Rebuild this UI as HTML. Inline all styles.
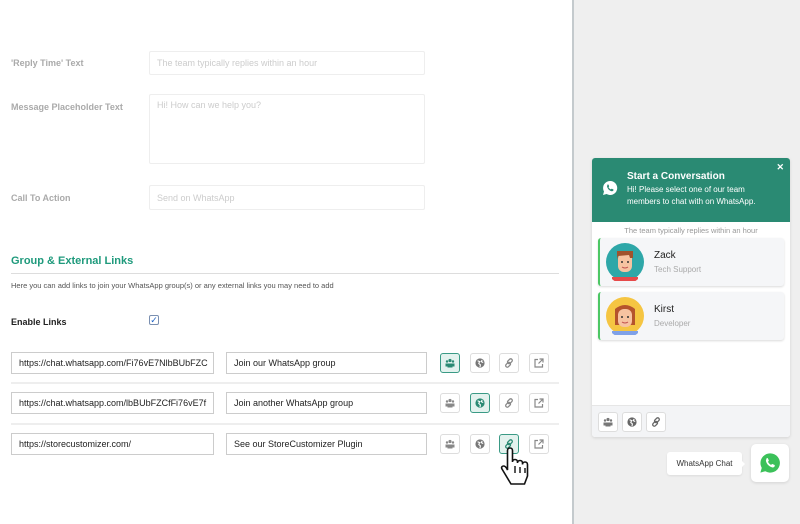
<!DOCTYPE html>
<html><head><style>
*{box-sizing:border-box;margin:0;padding:0}
body{width:800px;height:524px;overflow:hidden;font-family:"Liberation Sans",sans-serif;background:#fff;position:relative}
.abs{position:absolute}
.lbl{position:absolute;left:11px;font-size:9px;color:#aaa;font-weight:bold}
.in{position:absolute;border:1px solid #eee;border-radius:2px;font-size:9px;color:#ccc;padding:0 7px;display:flex;align-items:center}
.in2{position:absolute;border:1px solid #ccc;height:22px;font-size:9px;color:#222;padding:0 7px;display:flex;align-items:center;white-space:nowrap;overflow:hidden}
.ib{position:absolute;width:20px;height:20px;border:1px solid #ddd;border-radius:3px;background:#fff;display:flex;align-items:center;justify-content:center}
.ib.on{border-color:#3a9a85;background:#e3f2ee}
.sep{position:absolute;left:11px;width:548px;height:2px;background:#eee}
</style></head><body>
<div class="abs" style="left:0;top:0;width:573px;height:524px;background:#fff"></div>
<div class="abs" style="left:572px;top:0;width:2px;height:524px;background:#c4cacd"></div>
<div class="abs" style="left:574px;top:0;width:226px;height:524px;background:#efefef"></div>

<div class="lbl" style="top:58px">'Reply Time' Text</div>
<div class="in" style="left:149px;top:51px;width:276px;height:24px">The team typically replies within an hour</div>
<div class="lbl" style="top:102px">Message Placeholder Text</div>
<div class="in" style="left:149px;top:94px;width:276px;height:70px;align-items:flex-start;padding-top:5px">Hi! How can we help you?</div>
<div class="lbl" style="top:193px">Call To Action</div>
<div class="in" style="left:149px;top:185px;width:276px;height:25px">Send on WhatsApp</div>

<div class="abs" style="left:11px;top:255px;font-size:11px;font-weight:bold;color:#1f9a7c">Group &amp; External Links</div>
<div class="abs" style="left:11px;top:273px;width:548px;height:1px;background:#ddd"></div>
<div class="abs" style="left:11px;top:281px;font-size:7.5px;color:#555">Here you can add links to join your WhatsApp group(s) or any external links you may need to add</div>
<div class="abs" style="left:11px;top:317px;font-size:9px;font-weight:bold;color:#222">Enable Links</div>
<div class="abs" style="left:149px;top:315px;width:10px;height:10px;border:1px solid #7a8fb0;border-radius:2px;font-size:9px;line-height:8px;color:#1e63c6;text-align:center">✓</div>

<div class="in2" style="left:11px;top:352px;width:203px">https://chat.whatsapp.com/Fi76vE7NlbBUbFZC</div>
<div class="in2" style="left:226px;top:352px;width:201px">Join our WhatsApp group</div>
<div class="sep" style="top:382px"></div>
<div class="in2" style="left:11px;top:392px;width:203px">https://chat.whatsapp.com/lbBUbFZCfFi76vE7f</div>
<div class="in2" style="left:226px;top:392px;width:201px">Join another WhatsApp group</div>
<div class="sep" style="top:423px"></div>
<div class="in2" style="left:11px;top:433px;width:203px">https://storecustomizer.com/</div>
<div class="in2" style="left:226px;top:433px;width:201px">See our StoreCustomizer Plugin</div>

<svg width="0" height="0" style="position:absolute">
<defs>
<g id="grp"><circle cx="5" cy="2.5" r="1.6"/><circle cx="2" cy="3.5" r="1.2"/><circle cx="8" cy="3.5" r="1.2"/><path d="M2.5 5.5h5v4h-5z"/><path d="M0.5 5.5h2v3h-2zM7.5 5.5h2v3h-2z"/></g>
<g id="glb"><circle cx="5" cy="5" r="4.6"/><path d="M2.6 2.8l2 .8-.8 2 1.6 1.2-.4 2.2M7.2 2l-1 1.6 2 .9" stroke="#fff" stroke-width="1.1" fill="none"/></g>
<g id="lnk" fill="none" stroke-width="1.3"><rect x="4.5" y="0.5" width="3.2" height="5.5" rx="1.6" transform="rotate(45 6 3)"/><rect x="2.3" y="4" width="3.2" height="5.5" rx="1.6" transform="rotate(45 4 7)"/></g>
<g id="ext" fill="none" stroke-width="1.2"><path d="M4 1.5H1v7.5h7.5V6M5.5 1h3.5v3.5M9 1L4.5 5.5"/></g>
</defs></svg>

<div class="ib on" style="left:440px;top:353px"><svg width="10" height="10" fill="#2a8a73"><use href="#grp"/></svg></div>
<div class="ib" style="left:470px;top:353px"><svg width="10" height="10" fill="#777"><use href="#glb"/></svg></div>
<div class="ib" style="left:499px;top:353px"><svg width="10" height="10" stroke="#888"><use href="#lnk"/></svg></div>
<div class="ib" style="left:529px;top:353px"><svg width="10" height="10" stroke="#888"><use href="#ext"/></svg></div>

<div class="ib" style="left:440px;top:393px"><svg width="10" height="10" fill="#888"><use href="#grp"/></svg></div>
<div class="ib on" style="left:470px;top:393px"><svg width="10" height="10" fill="#2a8a73"><use href="#glb"/></svg></div>
<div class="ib" style="left:499px;top:393px"><svg width="10" height="10" stroke="#888"><use href="#lnk"/></svg></div>
<div class="ib" style="left:529px;top:393px"><svg width="10" height="10" stroke="#888"><use href="#ext"/></svg></div>

<div class="ib" style="left:440px;top:434px"><svg width="10" height="10" fill="#888"><use href="#grp"/></svg></div>
<div class="ib" style="left:470px;top:434px"><svg width="10" height="10" fill="#777"><use href="#glb"/></svg></div>
<div class="ib on" style="left:499px;top:434px"><svg width="10" height="10" stroke="#2a8a73"><use href="#lnk"/></svg></div>
<div class="ib" style="left:529px;top:434px"><svg width="10" height="10" stroke="#888"><use href="#ext"/></svg></div>

<svg class="abs" style="left:500px;top:446px" width="34" height="42" viewBox="0 0 34 42">
<path d="M10 2c1.5 0 2.5 1 2.5 2.5V16c0-1.5 1-2.5 2.5-2.5s2.5 1 2.5 2.5v1c0-1.5 1-2.5 2.5-2.5s2.5 1 2.5 2.5v1.5c0-1.5 1-2.5 2.5-2.5s2.5 1 2.5 2.5V30l-3 8H11l-6-10-3-5c-1-1.5 0-3 1.5-3 1 0 2 .5 3 2l1 2V4.5C7.5 3 8.5 2 10 2z" fill="#fff" stroke="#111" stroke-width="1.6"/>
<path d="M15 20v7M20 21v6M25 22v5" stroke="#111" stroke-width="1.4"/>
</svg>

<div class="abs" style="left:592px;top:158px;width:198px;height:279px;background:#fff;border-radius:3px;box-shadow:0 1px 3px rgba(0,0,0,.12);overflow:hidden">
 <div style="height:64px;background:#2a8a73;position:relative;color:#fff">
  <svg class="abs" style="left:10px;top:22px" width="16" height="16" viewBox="0 0 16 16"><path d="M8 1a7 7 0 0 0-6 10.5L1 15l3.6-1A7 7 0 1 0 8 1z" fill="#fff"/><path d="M5.5 4.5c.4-.3.8-.2 1 .2l.6 1.3c.1.3 0 .5-.2.7l-.4.4c.5 1 1.3 1.8 2.3 2.3l.4-.4c.2-.2.5-.3.7-.2l1.3.6c.3.2.4.6.2 1-.4.7-1 1-1.8.8-2.2-.6-3.9-2.3-4.5-4.5-.2-.7.1-1.3.4-1.7z" fill="#2a8a73"/></svg>
  <div class="abs" style="left:35px;top:13px;font-size:10px;font-weight:bold">Start a Conversation</div>
  <div class="abs" style="left:35px;top:26px;font-size:8px;line-height:12px">Hi! Please select one of our team<br>members to chat with on WhatsApp.</div>
  <div class="abs" style="right:6px;top:4px;font-size:9px;font-weight:bold">✕</div>
 </div>
 <div style="text-align:center;font-size:7.5px;color:#999;margin-top:4px">The team typically replies within an hour</div>
 <div class="abs" style="left:6px;top:80px;width:186px;height:48px;background:#f5f6f8;border-radius:3px;border-left:2px solid #4cc764;box-shadow:0 1px 2px rgba(0,0,0,.15)">
  <svg class="abs" style="left:6px;top:5px" width="38" height="38" viewBox="0 0 38 38"><circle cx="19" cy="19" r="19" fill="#2ea7a8"/><path d="M6 36a19 19 0 0 0 26 0v-2H6z" fill="#e64a4a"/><rect x="12" y="10" width="14" height="19" rx="6" fill="#f7c3a1"/><path d="M11 8h16v7h-3l-1-3-11 1-1 4z" fill="#a0522d"/><circle cx="16" cy="19" r="1" fill="#333"/><circle cx="22" cy="19" r="1" fill="#333"/><path d="M16 24q3 2 6 0" stroke="#c0504d" fill="none"/></svg>
  <div class="abs" style="left:54px;top:12px;font-size:10px;color:#222">Zack</div>
  <div class="abs" style="left:54px;top:27px;font-size:8px;color:#aaa">Tech Support</div>
 </div>
 <div class="abs" style="left:6px;top:134px;width:186px;height:48px;background:#f5f6f8;border-radius:3px;border-left:2px solid #4cc764;box-shadow:0 1px 2px rgba(0,0,0,.15)">
  <svg class="abs" style="left:6px;top:5px" width="38" height="38" viewBox="0 0 38 38"><circle cx="19" cy="19" r="19" fill="#f5c542"/><path d="M6 36a19 19 0 0 0 26 0v-2H6z" fill="#7fa1e8"/><path d="M9 12q10-8 20 0v16H9z" fill="#b5532c"/><rect x="12" y="12" width="14" height="18" rx="6" fill="#f7c3a1"/><circle cx="16" cy="20" r="1" fill="#333"/><circle cx="22" cy="20" r="1" fill="#333"/><path d="M16 25q3 2 6 0" stroke="#c0504d" fill="none"/></svg>
  <div class="abs" style="left:54px;top:12px;font-size:10px;color:#222">Kirst</div>
  <div class="abs" style="left:54px;top:27px;font-size:8px;color:#aaa">Developer</div>
 </div>
 <div class="abs" style="left:0;top:247px;width:198px;height:32px;background:#f3f4f6;border-top:1px solid #e6e6e6">
  <div class="ib" style="left:6px;top:6px"><svg width="10" height="10" fill="#777"><use href="#grp"/></svg></div>
  <div class="ib" style="left:30px;top:6px"><svg width="10" height="10" fill="#666"><use href="#glb"/></svg></div>
  <div class="ib" style="left:54px;top:6px"><svg width="10" height="10" stroke="#666"><use href="#lnk"/></svg></div>
 </div>
</div>

<div class="abs" style="left:667px;top:452px;width:75px;height:23px;background:#fff;border-radius:3px;font-size:8px;color:#333;display:flex;align-items:center;justify-content:center;box-shadow:0 1px 2px rgba(0,0,0,.08)">WhatsApp Chat</div>
<div class="abs" style="left:741px;top:460px;width:0;height:0;border-top:4px solid transparent;border-bottom:4px solid transparent;border-left:4px solid #fff"></div>
<div class="abs" style="left:751px;top:444px;width:38px;height:38px;background:#fff;border-radius:5px;box-shadow:0 1px 3px rgba(0,0,0,.12)">
 <svg class="abs" style="left:8px;top:8px" width="22" height="22" viewBox="0 0 16 16"><path d="M8 1a7 7 0 0 0-6 10.5L1 15l3.6-1A7 7 0 1 0 8 1z" fill="#3cc15a"/><path d="M5.5 4.5c.4-.3.8-.2 1 .2l.6 1.3c.1.3 0 .5-.2.7l-.4.4c.5 1 1.3 1.8 2.3 2.3l.4-.4c.2-.2.5-.3.7-.2l1.3.6c.3.2.4.6.2 1-.4.7-1 1-1.8.8-2.2-.6-3.9-2.3-4.5-4.5-.2-.7.1-1.3.4-1.7z" fill="#fff"/></svg>
</div>
</body></html>
